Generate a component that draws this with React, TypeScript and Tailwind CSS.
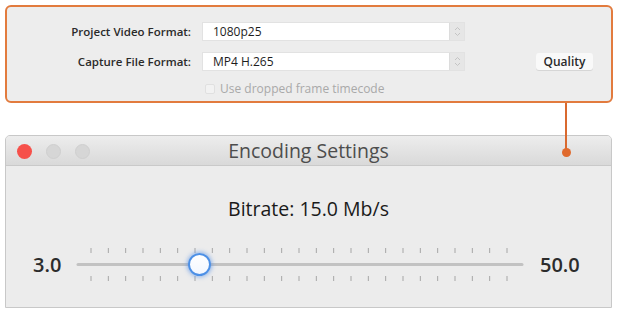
import React from "react";

const font = { fontFamily: '"Open Sans", "Liberation Sans", sans-serif' };

function Stepper() {
  return (
    <div className="w-[15px] h-full bg-[#e6e6e6] border-l border-[#dcdcdc] flex items-center justify-center">
      <svg width="7" height="11" viewBox="0 0 7 11">
        <path d="M1 4 L3.5 1.5 L6 4" fill="none" stroke="#c4c4c4" strokeWidth="1" />
        <path d="M1 7 L3.5 9.5 L6 7" fill="none" stroke="#c4c4c4" strokeWidth="1" />
      </svg>
    </div>
  );
}

function Select({ value }: { value: string }) {
  return (
    <div className="flex w-[261px] h-[17px] bg-white shadow-[0_0_0_1px_#e2e2e2]">
      <div className="flex-1 flex items-center pl-[10px] text-[12px] text-[#1d1d1d]">{value}</div>
      <Stepper />
    </div>
  );
}

export default function App() {
  const ticks = Array.from({ length: 25 }, (_, i) => 91 + (i * (507 - 91)) / 24);
  return (
    <div className="relative w-[618px] h-[312px] bg-white overflow-hidden" style={font}>
      {/* Top settings panel */}
      <div className="ml-[5px] mt-[5px] w-[608px] h-[98px] border-2 border-[#e27b3e] rounded-[6px] bg-[#ededed] pt-[16px]">
        <div className="flex flex-col gap-[13px]">
          <div className="flex items-center h-[17px]">
            <div className="w-[184px] text-right text-[11.5px] font-semibold text-[#2a2a2a]">Project Video Format:</div>
            <div className="ml-[12px]">
              <Select value="1080p25" />
            </div>
          </div>
          <div className="flex items-center h-[17px]">
            <div className="w-[184px] text-right text-[11.5px] font-semibold text-[#2a2a2a]">Capture File Format:</div>
            <div className="ml-[12px]">
              <Select value="MP4 H.265" />
            </div>
            <div className="ml-[72px] w-[57px] h-[17px] bg-[#f9f9f9] shadow-[0_1px_0_#d6d6d6] rounded-[3px] flex items-center justify-center text-[12px] font-semibold text-[#2a2a2a]">
              Quality
            </div>
          </div>
        </div>
        <div className="flex items-center mt-[12px] ml-[198px] h-[14px]">
          <div className="w-[10px] h-[10px] bg-[#f2f2f2] border border-[#e0e0e0] rounded-[2px]" />
          <div className="ml-[5px] text-[12px] text-[#a9a9a9]">Use dropped frame timecode</div>
        </div>
      </div>

      {/* Window */}
      <div className="ml-[5px] mt-[32px] w-[607px] h-[173px] border border-[#c8c8c8] rounded-t-[5px] bg-[#ececec] flex flex-col overflow-hidden">
        <div className="relative h-[30px] bg-gradient-to-b from-[#ededed] to-[#d9d9d9] border-b border-[#c9c9c9] flex items-center justify-center">
          <div className="absolute left-[11px] top-[8px] flex gap-[14px]">
            <div className="w-[15px] h-[15px] rounded-full bg-[#f6504a]" />
            <div className="w-[15px] h-[15px] rounded-full bg-[#d6d6d6] border border-[#cfcfcf]" />
            <div className="w-[15px] h-[15px] rounded-full bg-[#d6d6d6] border border-[#cfcfcf]" />
          </div>
          <div className="text-[19.5px] text-[#4d4d4d]">Encoding Settings</div>
        </div>
        <div className="flex-1 flex flex-col items-center">
          <div className="mt-[31px] text-[19.5px] text-[#1a1a1a] font-medium leading-[24px]">Bitrate: 15.0 Mb/s</div>
          <div className="relative w-full mt-[23px] h-[40px]">
            <div className="absolute left-[27px] top-[6px] text-[20px] font-semibold text-[#2c2c2c]">3.0</div>
            <div className="absolute left-[534px] top-[6px] text-[20px] font-semibold text-[#2c2c2c]">50.0</div>
            <svg className="absolute left-0 top-0" width="607" height="40" viewBox="0 0 607 40">
              {ticks.map((x, i) => (
                <g key={i}>
                  <line x1={x - 6} y1="4" x2={x - 6} y2="9" stroke="#a6a6a6" strokeWidth="1" />
                  <line x1={x - 6} y1="32" x2={x - 6} y2="37" stroke="#a6a6a6" strokeWidth="1" />
                </g>
              ))}
              <line x1="72" y1="20.5" x2="516" y2="20.5" stroke="#c2c2c2" strokeWidth="3" strokeLinecap="round" />
            </svg>
            <div className="absolute left-[182px] top-[9px] w-[23px] h-[23px] rounded-full bg-gradient-to-b from-[#ffffff] to-[#f3f7ff] border-[2px] border-[#4d90e6] shadow-[0_0_4px_1px_rgba(80,140,230,0.6)]" />
          </div>
        </div>
      </div>

      {/* Connector */}
      <div className="absolute z-10 left-[565px] top-[103px] w-[2px] h-[49px] bg-[#d9692f]" />
      <div className="absolute z-10 left-[562px] top-[148px] w-[9px] h-[9px] rounded-full bg-[#e06a2d]" />
    </div>
  );
}
